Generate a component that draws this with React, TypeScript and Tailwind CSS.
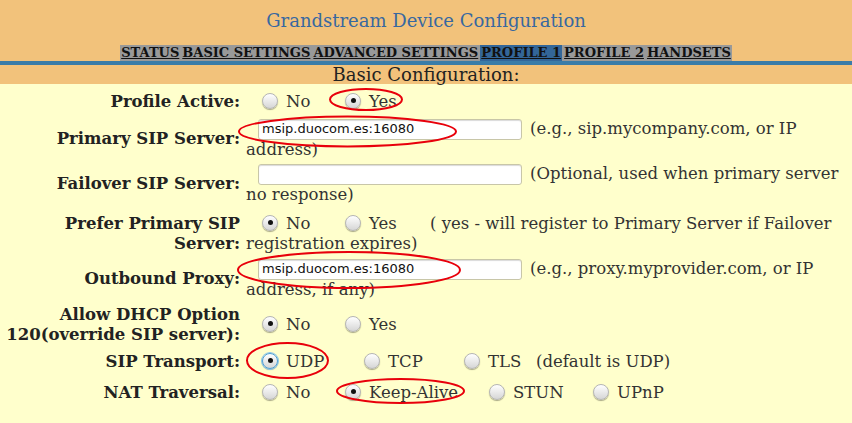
import React from 'react';

const serif = "font-['DejaVu_Serif',serif]";

function Radio({ checked, focus }: { checked?: boolean; focus?: boolean }) {
  return (
    <span
      className={
        'relative inline-flex h-[16px] w-[16px] shrink-0 items-center justify-center rounded-full border bg-gradient-to-b from-white to-[#d6d6d6] shadow-[0_1px_1px_rgba(0,0,0,0.35)] ' +
        (focus ? 'border-[#4a9fd8] ring-1 ring-[#8cc4ea]' : 'border-[#b5b5b5]')
      }
    >
      {checked && <span className="h-[5px] w-[5px] rounded-full bg-[#111]" />}
    </span>
  );
}

function Option({ label, checked, focus, w }: { label: string; checked?: boolean; focus?: boolean; w: string }) {
  return (
    <span className={'flex items-center gap-[8px] ' + w}>
      <span className="-mt-[3px] flex">
        <Radio checked={checked} focus={focus} />
      </span>
      <span>{label}</span>
    </span>
  );
}

function Label({ children }: { children: React.ReactNode }) {
  return (
    <div className="w-[240px] shrink-0 text-right text-[16.5px] font-bold leading-[20px] text-[#222]">
      {children}
    </div>
  );
}

function TextBox({ value }: { value?: string }) {
  return (
    <span className="ml-[12px] flex h-[21px] w-[264px] items-center rounded-[3px] border border-[#c8c6a8] bg-white px-[3px] font-['DejaVu_Sans',sans-serif] text-[13px] text-[#111] shadow-[inset_0_1px_1px_rgba(0,0,0,0.15)]">
      {value}
    </span>
  );
}

const navItems = ['STATUS', 'BASIC SETTINGS', 'ADVANCED SETTINGS', 'PROFILE 1', 'PROFILE 2', 'HANDSETS'];

export default function App() {
  return (
    <div className={`relative min-h-[423px] w-[852px] overflow-hidden bg-[#ffffcc] ${serif} text-[#333]`}>
      {/* header */}
      <div className="bg-[#f2c27b]">
        <div className="h-[45px] pt-[11px] text-center text-[18px] leading-[20px] text-[#3868a0]">
          Grandstream Device Configuration
        </div>
        <div className="flex justify-center">
          <div className="flex h-[16px] items-center gap-[1px] bg-[#999999] text-[13px] font-bold leading-[16px] text-[#111]">
            {navItems.map(item => (
              <span
                key={item}
                className={'px-[1px] underline ' + (item === 'PROFILE 1' ? 'bg-[#336699]' : '')}
              >
                {item}
              </span>
            ))}
          </div>
        </div>
        <div className="h-[4px] bg-[#3a7ca8]" />
        <div className="h-[19px] text-center text-[18px] leading-[19px] text-[#222]">Basic Configuration:</div>
      </div>

      {/* form */}
      <div className="flex flex-col text-[16.5px] leading-[20px]">
        <div className="mt-[8px] flex items-center gap-[6px]">
          <Label>Profile Active:</Label>
          <div className="flex pl-[16px]">
            <Option label="No" w="w-[83px]" />
            <Option label="Yes" checked w="w-[83px]" />
          </div>
        </div>

        <div className="mt-[6px] flex items-center gap-[6px]">
          <Label>Primary SIP Server:</Label>
          <div>
            <div className="flex h-[22px] items-center gap-[8px]">
              <TextBox value="msip.duocom.es:16080" />
              <span>(e.g., sip.mycompany.com, or IP</span>
            </div>
            <div>address)</div>
          </div>
        </div>

        <div className="mt-[3px] flex items-center gap-[6px]">
          <Label>Failover SIP Server:</Label>
          <div>
            <div className="flex h-[22px] items-center gap-[8px]">
              <TextBox />
              <span>(Optional, used when primary server</span>
            </div>
            <div>no response)</div>
          </div>
        </div>

        <div className="mt-[9px] flex items-center gap-[6px]">
          <Label>
            Prefer Primary SIP
            <br />
            Server:
          </Label>
          <div>
            <div className="flex pl-[16px]">
              <Option label="No" checked w="w-[83px]" />
              <Option label="Yes" w="w-[85px]" />
              <span>( yes - will register to Primary Server if Failover</span>
            </div>
            <div>registration expires)</div>
          </div>
        </div>

        <div className="mt-[4px] flex items-center gap-[6px]">
          <Label>Outbound Proxy:</Label>
          <div>
            <div className="flex h-[22px] items-center gap-[8px]">
              <TextBox value="msip.duocom.es:16080" />
              <span>(e.g., proxy.myprovider.com, or IP</span>
            </div>
            <div>address, if any)</div>
          </div>
        </div>

        <div className="mt-[5px] flex items-center gap-[6px]">
          <Label>
            Allow DHCP Option
            <br />
            120(override SIP server):
          </Label>
          <div className="flex pl-[16px]">
            <Option label="No" checked w="w-[83px]" />
            <Option label="Yes" w="w-[83px]" />
          </div>
        </div>

        <div className="mt-[7px] flex items-center gap-[6px]">
          <Label>SIP Transport:</Label>
          <div className="flex pl-[16px]">
            <Option label="UDP" checked focus w="w-[102px]" />
            <Option label="TCP" w="w-[100px]" />
            <Option label="TLS" w="w-[72px]" />
            <span>(default is UDP)</span>
          </div>
        </div>

        <div className="mt-[11px] flex items-center gap-[6px]">
          <Label>NAT Traversal:</Label>
          <div className="flex pl-[16px]">
            <Option label="No" w="w-[83px]" />
            <Option label="Keep-Alive" checked w="w-[144px]" />
            <Option label="STUN" w="w-[104px]" />
            <Option label="UPnP" w="w-[80px]" />
          </div>
        </div>
      </div>

      {/* red annotation marks */}
      <svg className="pointer-events-none absolute left-0 top-0" width="852" height="423" viewBox="0 0 852 423">
        <g fill="none" stroke="#e8000b" strokeWidth="2">
          <ellipse cx="366" cy="99.5" rx="36" ry="10.5" />
          <ellipse cx="347.5" cy="131.5" rx="108.5" ry="15" />
          <ellipse cx="349" cy="270" rx="111" ry="18" />
          <ellipse cx="287.5" cy="360.5" rx="40.5" ry="17.5" />
          <ellipse cx="400.5" cy="391" rx="63.5" ry="12" />
        </g>
      </svg>
    </div>
  );
}
